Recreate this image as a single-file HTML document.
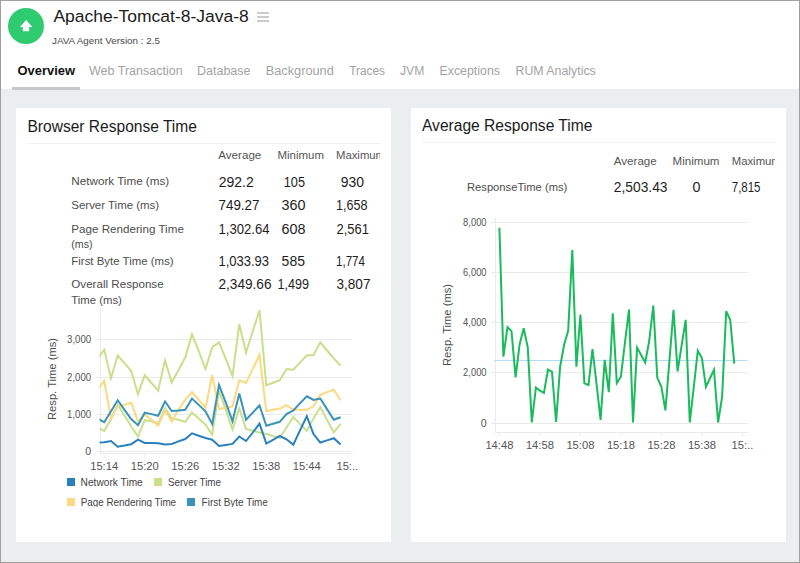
<!DOCTYPE html>
<html><head><meta charset="utf-8"><style>
html,body{margin:0;padding:0;}
body{width:800px;height:563px;overflow:hidden;position:relative;background:#fff;font-family:"Liberation Sans",sans-serif;}
.t{position:absolute;white-space:nowrap;line-height:1;transform-origin:0 0;}
.bg{position:absolute;left:0;top:89px;width:800px;height:474px;background:#ecedef;}
.card{position:absolute;top:108px;height:434px;width:375px;background:#fff;}
.frame{position:absolute;left:0;top:0;width:800px;height:563px;box-sizing:border-box;border:1px solid #a0a0a0;}
</style></head><body>
<div class="bg"></div>
<div class="card" style="left:16px"></div>
<div class="card" style="left:411px"></div>
<div style="position:absolute;left:27px;top:143px;width:353px;height:1px;background:#f2f2f2"></div>
<div style="position:absolute;left:422px;top:142px;width:353px;height:1px;background:#f2f2f2"></div>
<div style="position:absolute;left:12px;top:87px;width:68px;height:3px;background:#c8c8c8"></div>
<div style="position:absolute;left:8px;top:8px;width:36px;height:36px;border-radius:50%;background:#2ecb70"></div>
<svg width="14" height="13" style="position:absolute;left:19.9px;top:19.7px" viewBox="0 0 14 13"><path d="M0 6.9 L6.15 0 L12.3 6.9 L9.1 6.9 L9.1 11.2 L2.8 11.2 L2.8 6.9 Z" fill="#fff"/></svg>
<div style="position:absolute;left:257px;top:12px;width:12px;height:2px;background:#cbcbcb"></div>
<div style="position:absolute;left:257px;top:16px;width:12px;height:2px;background:#cbcbcb"></div>
<div style="position:absolute;left:257px;top:20px;width:12px;height:2px;background:#cbcbcb"></div>
<div style="position:absolute;left:67px;top:478px;width:8px;height:8px;background:#2a80bd"></div>
<div style="position:absolute;left:154px;top:478px;width:8px;height:8px;background:#c9df8b"></div>
<div style="position:absolute;left:67px;top:498px;width:8px;height:8px;background:#fcd880"></div>
<div style="position:absolute;left:187px;top:498px;width:8px;height:8px;background:#3a93b8"></div>
<svg width="800" height="563" style="position:absolute;left:0;top:0">
<defs><clipPath id="lc"><rect x="99.5" y="300" width="260" height="153"/></clipPath></defs>
<g stroke="#eaeaea" stroke-width="1" fill="none"><line x1="96" y1="339.5" x2="352.5" y2="339.5"/><line x1="96" y1="377.5" x2="352.5" y2="377.5"/><line x1="96" y1="414.5" x2="352.5" y2="414.5"/><line x1="96" y1="451.5" x2="352.5" y2="451.5"/><line x1="491" y1="222.5" x2="747.5" y2="222.5"/><line x1="491" y1="272.5" x2="747.5" y2="272.5"/><line x1="491" y1="322.5" x2="747.5" y2="322.5"/><line x1="491" y1="372.5" x2="747.5" y2="372.5"/><line x1="491" y1="423.5" x2="747.5" y2="423.5"/>
<line x1="100.5" y1="308" x2="100.5" y2="453.5"/><line x1="100.5" y1="453.5" x2="352.5" y2="453.5"/>
<line x1="495.5" y1="218" x2="495.5" y2="432.5"/><line x1="495.5" y1="432.5" x2="747.5" y2="432.5"/>
<line x1="104.2" y1="453" x2="104.2" y2="457.5"/><line x1="144.7" y1="453" x2="144.7" y2="457.5"/><line x1="185.2" y1="453" x2="185.2" y2="457.5"/><line x1="225.8" y1="453" x2="225.8" y2="457.5"/><line x1="266.3" y1="453" x2="266.3" y2="457.5"/><line x1="306.8" y1="453" x2="306.8" y2="457.5"/><line x1="347.3" y1="453" x2="347.3" y2="457.5"/><line x1="499.4" y1="432" x2="499.4" y2="436"/><line x1="539.9" y1="432" x2="539.9" y2="436"/><line x1="580.4" y1="432" x2="580.4" y2="436"/><line x1="620.9" y1="432" x2="620.9" y2="436"/><line x1="661.4" y1="432" x2="661.4" y2="436"/><line x1="701.9" y1="432" x2="701.9" y2="436"/><line x1="742.4" y1="432" x2="742.4" y2="436"/></g>
<g fill="none" stroke-width="2" stroke-linejoin="miter" clip-path="url(#lc)">
<path d="M97.4,359.0 L104.2,349.8 L111.0,378.2 L117.7,355.5 L124.5,363.2 L131.2,371.0 L138.0,394.2 L144.7,375.3 L151.5,383.0 L158.2,390.7 L165.0,360.4 L171.7,382.4 L178.5,370.0 L185.2,357.6 L192.0,334.4 L198.7,351.2 L205.5,369.0 L212.2,347.2 L219.0,342.4 L225.8,359.0 L232.5,376.0 L239.3,324.2 L246.0,352.6 L252.8,331.3 L259.5,310.2 L266.3,385.3 L273.0,382.8 L279.8,380.2 L286.5,369.0 L293.3,369.7 L300.0,362.6 L306.8,355.2 L313.5,355.2 L320.3,342.4 L327.0,350.5 L333.8,358.4 L340.6,365.7" stroke="#c9df8b"/>
<path d="M97.4,427.6 L104.2,430.9 L111.0,419.0 L117.7,404.9 L124.5,415.5 L131.2,426.2 L138.0,436.5 L144.7,420.2 L151.5,421.2 L158.2,423.3 L165.0,408.0 L171.7,418.4 L178.5,419.8 L185.2,421.9 L192.0,412.4 L198.7,418.4 L205.5,424.7 L212.2,434.7 L219.0,390.7 L225.8,409.8 L232.5,429.4 L239.3,408.4 L246.0,429.0 L252.8,430.8 L259.5,432.5 L266.3,433.9 L273.0,436.0 L279.8,437.9 L286.5,427.5 L293.3,417.0 L300.0,424.0 L306.8,430.9 L313.5,418.4 L320.3,407.0 L327.0,419.8 L333.8,432.3 L340.6,423.8" stroke="#c9df8b"/>
<path d="M97.4,390.0 L104.2,380.7 L111.0,418.4 L117.7,406.3 L124.5,404.9 L131.2,402.7 L138.0,421.2 L144.7,414.8 L151.5,419.8 L158.2,425.5 L165.0,410.2 L171.7,421.5 L178.5,409.8 L185.2,399.9 L192.0,392.1 L198.7,399.9 L205.5,407.7 L212.2,375.3 L219.0,409.1 L225.8,407.7 L232.5,406.3 L239.3,380.3 L246.0,383.0 L252.8,368.9 L259.5,354.7 L266.3,411.2 L273.0,409.8 L279.8,408.6 L286.5,405.2 L293.3,409.8 L300.0,409.8 L306.8,409.8 L313.5,406.3 L320.3,394.9 L327.0,392.1 L333.8,389.7 L340.6,400.2" stroke="#fcd880"/>
<path d="M97.4,418.6 L104.2,422.2 L111.0,411.3 L117.7,400.2 L124.5,409.8 L131.2,419.0 L138.0,425.2 L144.7,412.7 L151.5,414.1 L158.2,415.8 L165.0,401.5 L171.7,411.0 L178.5,410.5 L185.2,409.8 L192.0,398.5 L198.7,404.9 L205.5,411.3 L212.2,424.0 L219.0,385.0 L225.8,402.7 L232.5,421.2 L239.3,393.5 L246.0,419.7 L252.8,412.6 L259.5,405.5 L266.3,425.7 L273.0,423.7 L279.8,421.8 L286.5,414.0 L293.3,410.5 L300.0,403.4 L306.8,396.3 L313.5,399.9 L320.3,398.5 L327.0,409.1 L333.8,419.8 L340.6,417.2" stroke="#3a93b8"/>
<path d="M97.4,442.5 L104.2,442.2 L111.0,441.1 L117.7,446.8 L124.5,445.6 L131.2,444.2 L138.0,439.7 L144.7,442.9 L151.5,442.9 L158.2,443.2 L165.0,444.6 L171.7,443.9 L178.5,441.4 L185.2,439.0 L192.0,433.3 L198.7,435.7 L205.5,438.0 L212.2,439.7 L219.0,446.0 L225.8,445.0 L232.5,443.9 L239.3,436.5 L246.0,441.0 L252.8,432.5 L259.5,423.7 L266.3,443.6 L273.0,439.9 L279.8,436.0 L286.5,439.3 L293.3,444.6 L300.0,430.4 L306.8,416.2 L313.5,434.0 L320.3,442.5 L327.0,440.4 L333.8,438.2 L340.6,444.6" stroke="#2a80bd"/>
</g>
<line x1="494" y1="360.5" x2="747.5" y2="360.5" stroke="#b3dbf7" stroke-width="1"/>
<path d="M499.4,227.8 L503.4,356.7 L507.5,327.2 L511.5,331.1 L515.6,377.3 L519.6,344.4 L523.7,328.2 L527.8,347.6 L531.8,422.5 L535.9,387.6 L539.9,390.6 L543.9,392.9 L548.0,369.5 L552.0,371.9 L556.1,422.0 L560.1,367.0 L564.2,344.4 L568.2,330.6 L572.3,250.0 L576.4,366.6 L580.4,314.6 L584.4,383.3 L588.5,385.0 L592.5,349.2 L596.6,384.5 L600.6,419.9 L604.7,359.9 L608.8,392.2 L612.8,313.4 L616.8,383.1 L620.9,376.7 L624.9,343.0 L629.0,309.5 L633.0,422.5 L637.1,347.6 L641.1,355.0 L645.2,362.5 L649.2,341.0 L653.3,305.5 L657.3,377.8 L661.4,386.8 L665.4,410.3 L669.5,360.0 L673.5,309.9 L677.6,371.4 L681.6,345.6 L685.7,319.9 L689.8,422.5 L693.8,386.6 L697.8,350.7 L701.9,358.0 L705.9,386.8 L710.0,378.3 L714.0,369.8 L718.1,422.5 L722.1,397.0 L726.2,311.1 L730.2,319.8 L734.3,363.7" fill="none" stroke="#19bb5c" stroke-width="2" stroke-linejoin="miter"/>
</svg>
<div class="t" style="left:53px;top:8px;font-size:17.2px;color:#1b1b1b;transform:translateX(0.40px) scaleX(1.0174);">Apache-Tomcat-8-Java-8</div>
<div class="t" style="left:52px;top:36px;font-size:9.6px;color:#4a4a4a;transform:translateX(0.00px) scaleX(1.0256);">JAVA Agent Version : 2.5</div>
<div class="t" style="left:17px;top:65px;font-size:12.8px;color:#111;font-weight:bold;transform:translateX(0.50px) scaleX(1.0097);">Overview</div>
<div class="t" style="left:89px;top:65px;font-size:12.5px;color:#a3a3a3;transform:translateX(0.00px) scaleX(1.0005);">Web Transaction</div>
<div class="t" style="left:197px;top:65px;font-size:12.5px;color:#a3a3a3;transform:translateX(0.00px) scaleX(1.0000);">Database</div>
<div class="t" style="left:265px;top:65px;font-size:12.5px;color:#a3a3a3;transform:translateX(0.75px) scaleX(1.0195);">Background</div>
<div class="t" style="left:349px;top:65px;font-size:12.5px;color:#a3a3a3;transform:translateX(0.25px) scaleX(0.9470);">Traces</div>
<div class="t" style="left:400px;top:65px;font-size:12.5px;color:#a3a3a3;transform:translateX(0.00px) scaleX(0.9700);">JVM</div>
<div class="t" style="left:439px;top:65px;font-size:12.5px;color:#a3a3a3;transform:translateX(0.50px) scaleX(0.9894);">Exceptions</div>
<div class="t" style="left:515px;top:65px;font-size:12.5px;color:#a3a3a3;transform:translateX(0.50px) scaleX(0.9877);">RUM Analytics</div>
<div class="t" style="left:27px;top:119px;font-size:15.6px;color:#1b1b1b;transform:translateX(0.50px) scaleX(0.9974);">Browser Response Time</div>
<div class="t" style="left:218px;top:150px;font-size:11.3px;color:#555;transform:translateX(0.30px) scaleX(1.0263);">Average</div>
<div class="t" style="left:277px;top:150px;font-size:11.3px;color:#555;transform:translateX(0.50px) scaleX(1.0142);">Minimum</div>
<div class="t" style="left:336px;top:150px;font-size:11.3px;color:#555;transform:translateX(0.00px) scaleX(1.0010);width:43.56px;overflow:hidden;">Maximum</div>
<div class="t" style="left:71px;top:176px;font-size:11.2px;color:#4d4d4d;transform:translateX(0.30px) scaleX(1.0431);">Network Time (ms)</div>
<div class="t" style="left:71px;top:200px;font-size:11.2px;color:#4d4d4d;transform:translateX(0.30px) scaleX(1.0239);">Server Time (ms)</div>
<div class="t" style="left:71px;top:224px;font-size:11.2px;color:#4d4d4d;transform:translateX(0.30px) scaleX(1.0401);">Page Rendering Time</div>
<div class="t" style="left:71px;top:239px;font-size:11.2px;color:#4d4d4d;transform:translateX(0.30px) scaleX(0.9509);">(ms)</div>
<div class="t" style="left:71px;top:256px;font-size:11.2px;color:#4d4d4d;transform:translateX(0.30px) scaleX(1.0230);">First Byte Time (ms)</div>
<div class="t" style="left:71px;top:279px;font-size:11.2px;color:#4d4d4d;transform:translateX(0.30px) scaleX(1.0382);">Overall Response</div>
<div class="t" style="left:71px;top:295px;font-size:11.2px;color:#4d4d4d;transform:translateX(0.30px) scaleX(1.0130);">Time (ms)</div>
<div class="t" style="left:218px;top:176px;font-size:13.8px;color:#1e1e1e;transform:translateX(0.75px) scaleX(1.0130);">292.2</div>
<div class="t" style="left:283px;top:176px;font-size:13.8px;color:#1e1e1e;transform:translateX(0.75px) scaleX(0.9219);">105</div>
<div class="t" style="left:340px;top:176px;font-size:13.8px;color:#1e1e1e;transform:translateX(0.75px) scaleX(1.0087);">930</div>
<div class="t" style="left:218px;top:199px;font-size:13.8px;color:#1e1e1e;transform:translateX(0.50px) scaleX(0.9716);">749.27</div>
<div class="t" style="left:281px;top:199px;font-size:13.8px;color:#1e1e1e;transform:translateX(0.60px) scaleX(1.0412);">360</div>
<div class="t" style="left:336px;top:199px;font-size:13.8px;color:#1e1e1e;transform:translateX(0.00px) scaleX(0.9146);">1,658</div>
<div class="t" style="left:218px;top:223px;font-size:13.8px;color:#1e1e1e;transform:translateX(0.50px) scaleX(0.9516);">1,302.64</div>
<div class="t" style="left:281px;top:223px;font-size:13.8px;color:#1e1e1e;transform:translateX(0.60px) scaleX(1.0412);">608</div>
<div class="t" style="left:336px;top:223px;font-size:13.8px;color:#1e1e1e;transform:translateX(0.50px) scaleX(0.9407);">2,561</div>
<div class="t" style="left:218px;top:255px;font-size:13.8px;color:#1e1e1e;transform:translateX(0.50px) scaleX(0.9404);">1,033.93</div>
<div class="t" style="left:281px;top:255px;font-size:13.8px;color:#1e1e1e;transform:translateX(0.60px) scaleX(1.0152);">585</div>
<div class="t" style="left:336px;top:255px;font-size:13.8px;color:#1e1e1e;transform:translateX(0.00px) scaleX(0.8394);">1,774</div>
<div class="t" style="left:218px;top:278px;font-size:13.8px;color:#1e1e1e;transform:translateX(0.50px) scaleX(0.9870);">2,349.66</div>
<div class="t" style="left:277px;top:278px;font-size:13.8px;color:#1e1e1e;transform:translateX(0.50px) scaleX(0.9117);">1,499</div>
<div class="t" style="left:336px;top:278px;font-size:13.8px;color:#1e1e1e;transform:translateX(0.50px) scaleX(0.9841);">3,807</div>
<div class="t" style="left:67px;top:334px;font-size:10.6px;color:#555;transform:translateX(0.10px) scaleX(0.9040);">3,000</div>
<div class="t" style="left:67px;top:372px;font-size:10.6px;color:#555;transform:translateX(0.10px) scaleX(0.9040);">2,000</div>
<div class="t" style="left:67px;top:409px;font-size:10.6px;color:#555;transform:translateX(0.10px) scaleX(0.9040);">1,000</div>
<div class="t" style="left:85px;top:446px;font-size:10.6px;color:#555;transform:translateX(0.20px) scaleX(1.0000);">0</div>
<div class="t" style="left:90px;top:461px;font-size:11.2px;color:#555;transform:translateX(0.17px) scaleX(1.0000);">15:14</div>
<div class="t" style="left:130px;top:461px;font-size:11.2px;color:#555;transform:translateX(0.69px) scaleX(1.0000);">15:20</div>
<div class="t" style="left:171px;top:461px;font-size:11.2px;color:#555;transform:translateX(0.22px) scaleX(1.0000);">15:26</div>
<div class="t" style="left:211px;top:461px;font-size:11.2px;color:#555;transform:translateX(0.73px) scaleX(1.0000);">15:32</div>
<div class="t" style="left:252px;top:461px;font-size:11.2px;color:#555;transform:translateX(0.26px) scaleX(1.0000);">15:38</div>
<div class="t" style="left:292px;top:461px;font-size:11.2px;color:#555;transform:translateX(0.78px) scaleX(1.0000);">15:44</div>
<div class="t" style="left:336px;top:461px;font-size:11.2px;color:#555;transform:translateX(0.42px) scaleX(1.0000);">15:..</div>
<div class="t" style="left:80px;top:478px;font-size:10.4px;color:#444;transform:translateX(0.60px) scaleX(0.9788);">Network Time</div>
<div class="t" style="left:168px;top:478px;font-size:10.4px;color:#444;transform:translateX(0.00px) scaleX(0.9456);">Server Time</div>
<div class="t" style="left:80px;top:498px;font-size:10.4px;color:#444;transform:translateX(0.70px) scaleX(0.9493);height:8.50px;overflow:hidden;">Page Rendering Time</div>
<div class="t" style="left:201px;top:498px;font-size:10.4px;color:#444;transform:translateX(0.60px) scaleX(0.9575);height:8.50px;overflow:hidden;">First Byte Time</div>
<div class="t" style="left:422px;top:118px;font-size:15.6px;color:#1b1b1b;transform:translateX(0.00px) scaleX(0.9997);">Average Response Time</div>
<div class="t" style="left:613px;top:156px;font-size:11.3px;color:#555;transform:translateX(0.75px) scaleX(1.0263);">Average</div>
<div class="t" style="left:672px;top:156px;font-size:11.3px;color:#555;transform:translateX(0.50px) scaleX(1.0251);">Minimum</div>
<div class="t" style="left:731px;top:156px;font-size:11.3px;color:#555;transform:translateX(0.75px) scaleX(1.0010);width:43.01px;overflow:hidden;">Maximum</div>
<div class="t" style="left:467px;top:182px;font-size:11.2px;color:#4d4d4d;transform:translateX(0.00px) scaleX(1.0000);">ResponseTime (ms)</div>
<div class="t" style="left:613px;top:181px;font-size:13.8px;color:#1e1e1e;transform:translateX(0.75px) scaleX(1.0009);">2,503.43</div>
<div class="t" style="left:692px;top:181px;font-size:13.8px;color:#1e1e1e;transform:translateX(0.50px) scaleX(1.0390);">0</div>
<div class="t" style="left:731px;top:181px;font-size:13.8px;color:#1e1e1e;transform:translateX(0.75px) scaleX(0.8321);">7,815</div>
<div class="t" style="left:463px;top:217px;font-size:10.6px;color:#555;transform:translateX(0.10px) scaleX(0.8851);">8,000</div>
<div class="t" style="left:463px;top:267px;font-size:10.6px;color:#555;transform:translateX(0.10px) scaleX(0.8851);">6,000</div>
<div class="t" style="left:463px;top:317px;font-size:10.6px;color:#555;transform:translateX(0.10px) scaleX(0.8851);">4,000</div>
<div class="t" style="left:463px;top:367px;font-size:10.6px;color:#555;transform:translateX(0.10px) scaleX(0.8851);">2,000</div>
<div class="t" style="left:480px;top:418px;font-size:10.6px;color:#555;transform:translateX(0.70px) scaleX(1.0000);">0</div>
<div class="t" style="left:485px;top:440px;font-size:11.2px;color:#555;transform:translateX(0.38px) scaleX(1.0000);">14:48</div>
<div class="t" style="left:525px;top:440px;font-size:11.2px;color:#555;transform:translateX(0.88px) scaleX(1.0000);">14:58</div>
<div class="t" style="left:566px;top:440px;font-size:11.2px;color:#555;transform:translateX(0.38px) scaleX(1.0000);">15:08</div>
<div class="t" style="left:606px;top:440px;font-size:11.2px;color:#555;transform:translateX(0.88px) scaleX(1.0000);">15:18</div>
<div class="t" style="left:647px;top:440px;font-size:11.2px;color:#555;transform:translateX(0.38px) scaleX(1.0000);">15:28</div>
<div class="t" style="left:687px;top:440px;font-size:11.2px;color:#555;transform:translateX(0.88px) scaleX(1.0000);">15:38</div>
<div class="t" style="left:731px;top:440px;font-size:11.2px;color:#555;transform:translateX(0.50px) scaleX(1.0000);">15:..</div>
<div class="t" style="left:47.2px;top:420px;font-size:11.2px;color:#4d4d4d;transform:rotate(-90deg);">Resp. Time (ms)</div>
<div class="t" style="left:441.7px;top:366px;font-size:11.2px;color:#4d4d4d;transform:rotate(-90deg);">Resp. Time (ms)</div>
<div class="frame"></div>
</body></html>
